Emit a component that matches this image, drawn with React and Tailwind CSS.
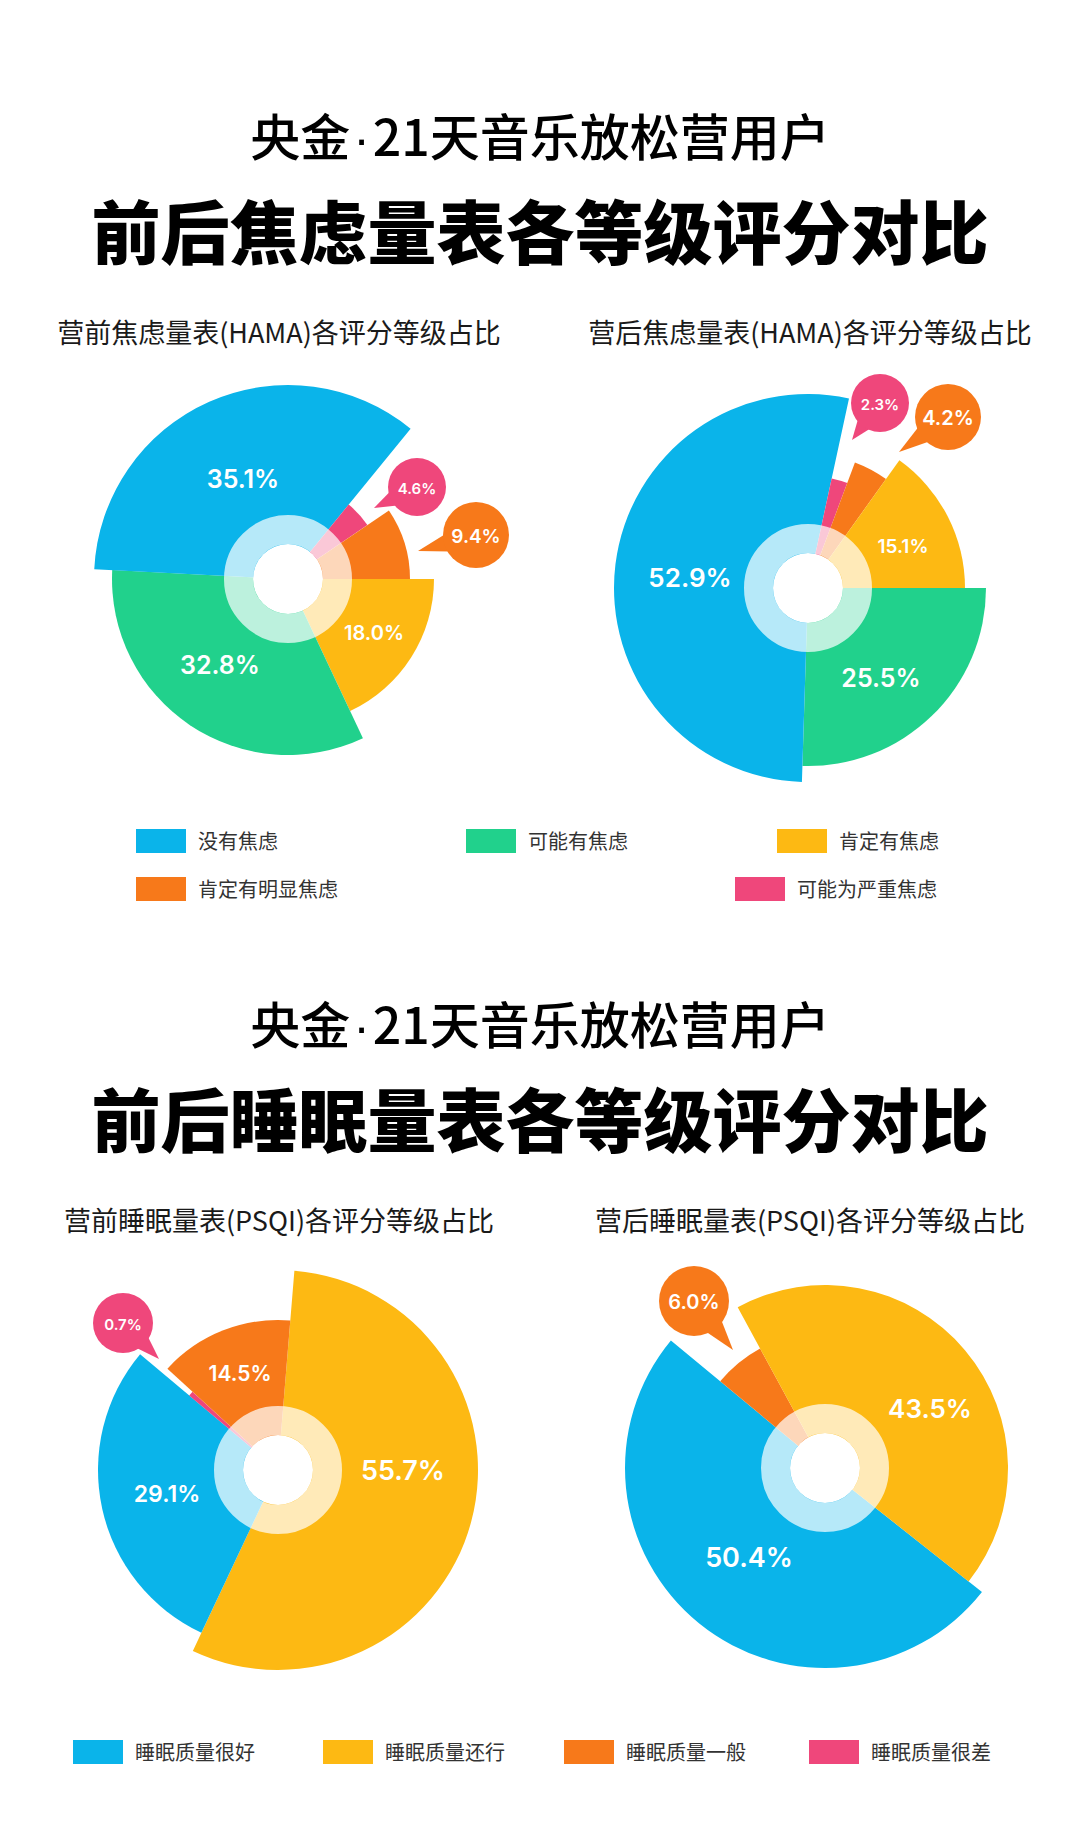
const C = {
  blue: '#0ab4ea',
  green: '#21d18c',
  yellow: '#fdb913',
  orange: '#f7791a',
  pink: '#ef477b',
}

function pt(cx, cy, r, a) {
  const t = (a * Math.PI) / 180
  return [cx + r * Math.cos(t), cy + r * Math.sin(t)]
}

function sector(cx, cy, r, a0, a1) {
  const [x0, y0] = pt(cx, cy, r, a0)
  const [x1, y1] = pt(cx, cy, r, a1)
  const large = a1 - a0 > 180 ? 1 : 0
  return `M${cx} ${cy}L${x0} ${y0}A${r} ${r} 0 ${large} 1 ${x1} ${y1}Z`
}

// speech bubble with a pointed tail toward the slice
function Bubble({ x, y, r, tip, color, text, size }) {
  const ang = (Math.atan2(tip[1] - y, tip[0] - x) * 180) / Math.PI
  const b1 = pt(x, y, r - 2, ang - 17)
  const b2 = pt(x, y, r - 2, ang + 17)
  return (
    <g>
      <polygon points={`${b1[0]},${b1[1]} ${tip[0]},${tip[1]} ${b2[0]},${b2[1]}`} fill={color} />
      <circle cx={x} cy={y} r={r} fill={color} />
      <text x={x} y={y + 1} textAnchor="middle" dominantBaseline="central" fill="#fff" fontSize={size} className="font-['Inter',sans-serif] font-semibold">
        {text}
      </text>
    </g>
  )
}

function Rose({ h, cx, cy, segs, labels, bubbles }) {
  return (
    <svg width="540" height={h} className="block">
      {segs.map((s, i) => (
        <path key={i} d={sector(cx, cy, s.r, s.a0, s.a1)} fill={s.c} />
      ))}
      <circle cx={cx} cy={cy} r="49.5" fill="none" stroke="#fff" strokeOpacity="0.7" strokeWidth="29" />
      <circle cx={cx} cy={cy} r="35" fill="#fff" />
      {labels.map((l, i) => (
        <text key={i} x={l.x} y={l.y} textAnchor="middle" dominantBaseline="central" fill="#fff" fontSize={l.s} className="font-['Inter',sans-serif] font-semibold">
          {l.t}
        </text>
      ))}
      {bubbles.map((b, i) => (
        <Bubble key={i} {...b} />
      ))}
    </svg>
  )
}

const cjk = "font-['Noto_Sans_CJK_SC',sans-serif]"

function Titles({ big }) {
  return (
    <>
      <div className={`${cjk} h-[48px] text-center text-[50px] leading-[48px] font-medium text-black`}>
        央金<span className="mx-[3px] font-['Liberation_Sans',sans-serif] leading-[0]">·</span>21天音乐放松营用户
      </div>
      <div className={`${cjk} mt-[34px] h-[74px] text-center text-[69px] leading-[74px] font-black text-black`}>{big}</div>
    </>
  )
}

function Swatch({ c, label, w }) {
  return (
    <div className={`flex items-center gap-3 ${w}`}>
      <div className="h-[24px] w-[50px]" style={{ backgroundColor: c }} />
      <span className={`${cjk} text-[20px] leading-[24px] text-[#333]`}>{label}</span>
    </div>
  )
}

export default function App() {
  return (
    <div className="min-h-[1834px] w-[1080px] bg-white pt-[110px]">
      <Titles big="前后焦虑量表各等级评分对比" />
      <div className={`${cjk} mt-[53px] grid grid-cols-2 text-[27px] leading-[26px] text-[#1a1a1a]`}>
        <div className="pl-[18px] text-center">营前焦虑量表(HAMA)各评分等级占比</div>
        <div className="text-center">营后焦虑量表(HAMA)各评分等级占比</div>
      </div>
      <div className="mt-[15px] grid grid-cols-2">
        <Rose
          h={440}
          cx={288}
          cy={219}
          segs={[
            { c: C.yellow, a0: 0, a1: 64.8, r: 146 },
            { c: C.green, a0: 64.8, a1: 182.9, r: 176 },
            { c: C.blue, a0: 182.9, a1: 309.2, r: 194 },
            { c: C.pink, a0: 309.2, a1: 325.8, r: 96 },
            { c: C.orange, a0: 325.8, a1: 360, r: 122 },
          ]}
          labels={[
            { t: '35.1%', x: 243, y: 119, s: 25 },
            { t: '32.8%', x: 220, y: 305, s: 25 },
            { t: '18.0%', x: 374, y: 273, s: 20 },
          ]}
          bubbles={[
            { x: 417, y: 127, r: 29, tip: [374, 148], color: C.pink, text: '4.6%', size: 15 },
            { x: 476, y: 175, r: 33, tip: [418, 191], color: C.orange, text: '9.4%', size: 19 },
          ]}
        />
        <Rose
          h={440}
          cx={268}
          cy={228}
          segs={[
            { c: C.green, a0: 0, a1: 91.8, r: 178 },
            { c: C.blue, a0: 91.8, a1: 282.2, r: 194 },
            { c: C.pink, a0: 282.2, a1: 290.5, r: 112 },
            { c: C.orange, a0: 290.5, a1: 305.6, r: 134 },
            { c: C.yellow, a0: 305.6, a1: 360, r: 157 },
          ]}
          labels={[
            { t: '52.9%', x: 150, y: 217, s: 26 },
            { t: '15.1%', x: 363, y: 186, s: 19 },
            { t: '25.5%', x: 341, y: 318, s: 25 },
          ]}
          bubbles={[
            { x: 340, y: 43, r: 29, tip: [312, 80], color: C.pink, text: '2.3%', size: 15 },
            { x: 408, y: 57, r: 33, tip: [359, 92], color: C.orange, text: '4.2%', size: 20 },
          ]}
        />
      </div>
      <div className="mt-[29px] flex pl-[136px]">
        <Swatch c={C.blue} label="没有焦虑" w="w-[330px]" />
        <Swatch c={C.green} label="可能有焦虑" w="w-[311px]" />
        <Swatch c={C.yellow} label="肯定有焦虑" w="" />
      </div>
      <div className="mt-[24px] flex pl-[136px]">
        <Swatch c={C.orange} label="肯定有明显焦虑" w="w-[599px]" />
        <Swatch c={C.pink} label="可能为严重焦虑" w="" />
      </div>

      <div className="mt-[97px]">
        <Titles big="前后睡眠量表各等级评分对比" />
      </div>
      <div className={`${cjk} mt-[53px] grid grid-cols-2 text-[27px] leading-[26px] text-[#1a1a1a]`}>
        <div className="pl-[18px] text-center">营前睡眠量表(PSQI)各评分等级占比</div>
        <div className="text-center">营后睡眠量表(PSQI)各评分等级占比</div>
      </div>
      <div className="mt-[9px] grid grid-cols-2">
        <Rose
          h={460}
          cx={278}
          cy={228}
          segs={[
            { c: C.yellow, a0: 274.7, a1: 475.2, r: 200 },
            { c: C.blue, a0: 115.2, a1: 220, r: 180 },
            { c: C.pink, a0: 220, a1: 222.5, r: 116 },
            { c: C.orange, a0: 222.5, a1: 274.7, r: 150 },
          ]}
          labels={[
            { t: '55.7%', x: 403, y: 228, s: 27 },
            { t: '29.1%', x: 167, y: 252, s: 23 },
            { t: '14.5%', x: 240, y: 131, s: 21 },
          ]}
          bubbles={[{ x: 123, y: 81, r: 30, tip: [159, 117], color: C.pink, text: '0.7%', size: 15 }]}
        />
        <Rose
          h={460}
          cx={285}
          cy={226}
          segs={[
            { c: C.blue, a0: 38.3, a1: 219.6, r: 200 },
            { c: C.orange, a0: 219.6, a1: 241.5, r: 136 },
            { c: C.yellow, a0: 241.5, a1: 398.3, r: 183 },
          ]}
          labels={[
            { t: '43.5%', x: 390, y: 166, s: 26 },
            { t: '50.4%', x: 209, y: 315, s: 27 },
          ]}
          bubbles={[{ x: 154, y: 59, r: 35, tip: [193, 108], color: C.orange, text: '6.0%', size: 20 }]}
        />
      </div>
      <div className="mt-[38px] flex pl-[73px]">
        <Swatch c={C.blue} label="睡眠质量很好" w="w-[250px]" />
        <Swatch c={C.yellow} label="睡眠质量还行" w="w-[241px]" />
        <Swatch c={C.orange} label="睡眠质量一般" w="w-[245px]" />
        <Swatch c={C.pink} label="睡眠质量很差" w="" />
      </div>
    </div>
  )
}
